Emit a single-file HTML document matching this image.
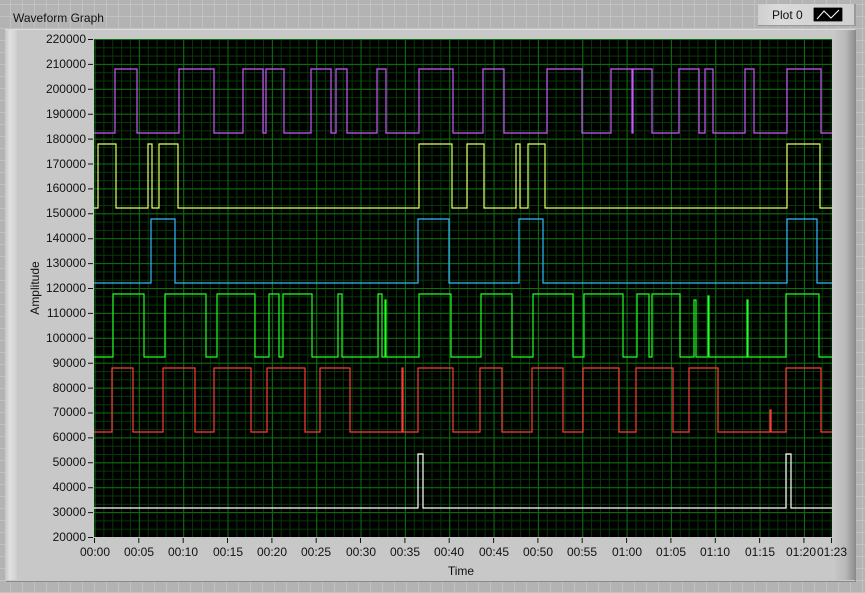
<!DOCTYPE html>
<html><head><meta charset="utf-8"><style>
html,body{margin:0;padding:0}
body{width:865px;height:593px;overflow:hidden;position:relative;font-family:"Liberation Sans",sans-serif;
background-color:#b3b3b3;
background-image:linear-gradient(to right,#c2c2c2 1px,transparent 1px),linear-gradient(to bottom,#c2c2c2 1px,transparent 1px);
background-size:12px 12px;background-position:10px 4px}
.t{position:absolute;font-size:12px;color:#111}
#panel{position:absolute;left:5px;top:29px;width:850px;height:551px;background:#c8c8c8;border-top:1px solid #dcdcdc;box-shadow:1px 1px 0 #8a8a8a}
#lstrip{position:absolute;left:5px;top:30px;width:12px;height:550px;background:linear-gradient(to right,#c4c4c4,#e0e0e0 40%,#cfcfcf)}
#rstrip{position:absolute;left:832px;top:30px;width:23px;height:550px;background:linear-gradient(to right,#cacaca,#b8b8b8 60%,#8e8e8e)}
#legend{position:absolute;left:758px;top:4px;width:96px;height:21px;background:linear-gradient(to right,#cfcfcf,#dadada 20%,#d0d0d0);border-right:2px solid #999;border-bottom:1px solid #999}
</style></head><body>
<div class="t" style="left:13px;top:11px;font-size:12px">Waveform Graph</div>
<div id="legend">
<div class="t" style="left:14px;top:4px">Plot 0</div>
<svg style="position:absolute;left:55px;top:3px" width="30" height="15"><rect x="0" y="0" width="30" height="15" fill="#000" stroke="#fff" stroke-width="1"/><polyline points="4,12 11,4 18,11 26,3" fill="none" stroke="#fff" stroke-width="1"/></svg>
</div>
<div id="panel"></div>
<div id="lstrip"></div>
<div id="rstrip"></div>
<svg style="position:absolute;left:0;top:0" width="865" height="593">
<defs>
<pattern id="mv" x="94.5" y="0" width="8.868" height="10" patternUnits="userSpaceOnUse"><rect x="0" y="0" width="1" height="10" fill="#063806"/></pattern>
<pattern id="mh" x="0" y="39" width="10" height="8.3" patternUnits="userSpaceOnUse"><rect x="0" y="0" width="10" height="1" fill="#063806"/></pattern>
<pattern id="Mv" x="94.5" y="0" width="44.34" height="10" patternUnits="userSpaceOnUse"><rect x="0" y="0" width="1" height="10" fill="#0c700c"/></pattern>
<pattern id="Mh" x="0" y="39" width="10" height="24.9" patternUnits="userSpaceOnUse"><rect x="0" y="0" width="10" height="1" fill="#0c700c"/></pattern>
</defs>
<rect x="94" y="39" width="738" height="498" fill="#000"/>
<rect x="94" y="39" width="738" height="498" fill="url(#mv)"/>
<rect x="94" y="39" width="738" height="498" fill="url(#mh)"/>
<rect x="94" y="39" width="738" height="498" fill="url(#Mv)"/>
<rect x="94" y="39" width="738" height="498" fill="url(#Mh)"/>
<g fill="none" stroke-width="1.2">
<path stroke="#cc55ff" d="M94,133 H115 V69 H137 V133 H179 V69 H214 V133 H243 V69 H263 V133 H266 V69 H284 V133 H311 V69 H331 V133 H336 V69 H347 V133 H377 V69 H386 V133 H419 V69 H453 V133 H483 V69 H504 V133 H547 V69 H582 V133 H611 V69 H632 V133 H633 V69 H652 V133 H679 V69 H699 V133 H705 V69 H713 V133 H745 V69 H754 V133 H787 V69 H821 V133 H832"/>
<path stroke="#e6ff66" d="M94,208 H98 V144 H116 V208 H148 V144 H152 V208 H159 V144 H178 V208 H419 V144 H452 V208 H467 V144 H484 V208 H516 V144 H520 V208 H528 V144 H545 V208 H787 V144 H820 V208 H832"/>
<path stroke="#33b8ff" d="M94,283 H151 V219 H175 V283 H418 V219 H449 V283 H519 V219 H543 V283 H787 V219 H817 V283 H832"/>
<path stroke="#22ff22" d="M94,357 H113 V294 H144 V357 H165 V294 H206 V357 H217 V294 H255 V357 H269 V294 H279 V357 H283 V294 H312 V357 H338 V294 H342 V357 H378 V294 H382 V357 H385 V300 H386 V357 H419 V294 H451 V357 H481 V294 H512 V357 H533 V294 H573 V357 H584 V294 H623 V357 H637 V294 H649 V357 H652 V294 H680 V357 H694 V300 H696 V357 H708 V296 H709 V357 H747 V300 H748 V357 H786 V294 H819 V357 H832"/>
<path stroke="#ff3b3b" d="M94,432 H112 V368 H133 V432 H163 V368 H195 V432 H214 V368 H251 V432 H267 V368 H305 V432 H320 V368 H350 V432 H402 V368 H403 V432 H418 V368 H453 V432 H480 V368 H502 V432 H532 V368 H563 V432 H583 V368 H619 V432 H636 V368 H673 V432 H689 V368 H718 V432 H770 V410 H771 V432 H786 V368 H821 V432 H832"/>
<path stroke="#ffffff" d="M94,508 H418 V454 H423 V508 H786 V454 H791 V508 H832"/>
</g>
<text x="39" y="288" transform="rotate(-90 39 288)" text-anchor="middle" font-family="Liberation Sans" font-size="12" fill="#111">Amplitude</text>
<text x="461" y="575" text-anchor="middle" font-family="Liberation Sans" font-size="12" fill="#111">Time</text>
<g font-family="Liberation Sans" font-size="12" fill="#111" text-anchor="end">
<text x="86" y="43">220000</text><text x="86" y="68">210000</text><text x="86" y="93">200000</text><text x="86" y="118">190000</text><text x="86" y="143">180000</text><text x="86" y="168">170000</text><text x="86" y="192">160000</text><text x="86" y="217">150000</text><text x="86" y="242">140000</text><text x="86" y="267">130000</text><text x="86" y="292">120000</text><text x="86" y="317">110000</text><text x="86" y="342">100000</text><text x="86" y="367">90000</text><text x="86" y="392">80000</text><text x="86" y="416">70000</text><text x="86" y="441">60000</text><text x="86" y="466">50000</text><text x="86" y="491">40000</text><text x="86" y="516">30000</text><text x="86" y="541">20000</text>
</g>
<g stroke="#111" stroke-width="1">
<path d="M88,39.5H93M88,64.4H93M88,89.3H93M88,114.2H93M88,139.1H93M88,164H93M88,188.9H93M88,213.8H93M88,238.7H93M88,263.6H93M88,288.5H93M88,313.4H93M88,338.3H93M88,363.2H93M88,388.1H93M88,413H93M88,437.9H93M88,462.8H93M88,487.7H93M88,512.6H93M88,537.5H93"/>
<path d="M94.5,538V543M138.8,538V543M183.2,538V543M227.5,538V543M271.9,538V543M316.2,538V543M360.5,538V543M404.9,538V543M449.2,538V543M493.6,538V543M537.9,538V543M582.2,538V543M626.6,538V543M670.9,538V543M715.3,538V543M759.6,538V543M803.9,538V543M831.5,538V543"/>
</g>
<g font-family="Liberation Sans" font-size="12" fill="#111" text-anchor="middle">
<text x="95" y="556">00:00</text><text x="139" y="556">00:05</text><text x="183" y="556">00:10</text><text x="228" y="556">00:15</text><text x="272" y="556">00:20</text><text x="316" y="556">00:25</text><text x="361" y="556">00:30</text><text x="405" y="556">00:35</text><text x="449" y="556">00:40</text><text x="494" y="556">00:45</text><text x="538" y="556">00:50</text><text x="582" y="556">00:55</text><text x="627" y="556">01:00</text><text x="671" y="556">01:05</text><text x="715" y="556">01:10</text><text x="760" y="556">01:15</text><text x="801" y="556">01:20</text><text x="832" y="556">01:23</text>
</g>
</svg>
</body></html>
